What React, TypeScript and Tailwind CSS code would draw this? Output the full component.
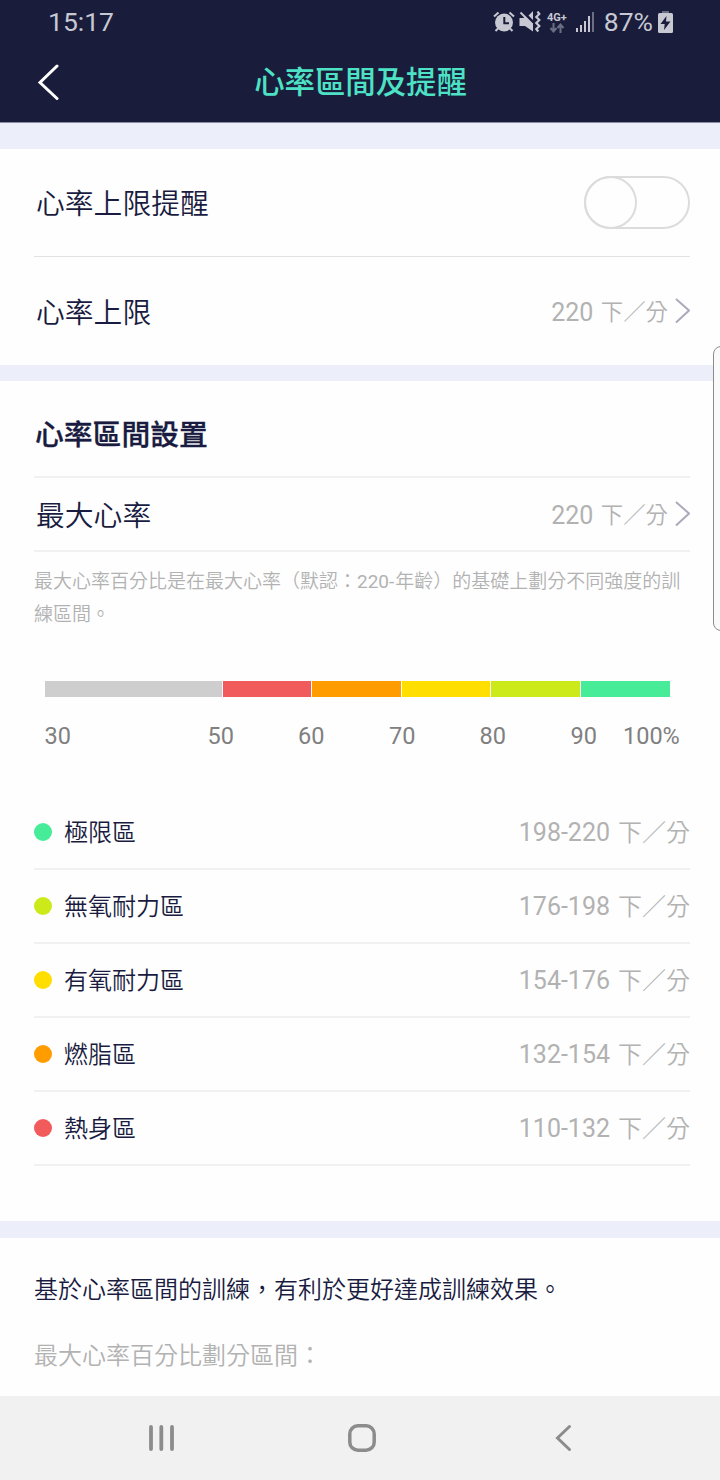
import React from 'react';

interface Zone {
    name: string;
    range: string;
    dot: string;
}

const zones: Zone[] = [
    { name: '極限區', range: '198-220', dot: 'bg-[#46ec98]' },
    { name: '無氧耐力區', range: '176-198', dot: 'bg-[#ccea1a]' },
    { name: '有氧耐力區', range: '154-176', dot: 'bg-[#ffde00]' },
    { name: '燃脂區', range: '132-154', dot: 'bg-[#ff9c00]' },
    { name: '熱身區', range: '110-132', dot: 'bg-[#f15b5b]' },
];

const segments = [
    'w-[177px] bg-[#cecece]',
    'w-[88.6px] bg-[#f15b5b]',
    'w-[88.6px] bg-[#ff9c00]',
    'w-[88.6px] bg-[#ffde00]',
    'w-[88.6px] bg-[#ccea1a]',
    'w-[89px] bg-[#46ec98]',
];

const StatusBar: React.FC = () => (
    <div className="flex h-[44px] items-center justify-between pr-[47px] pl-[48px] text-[#c7c8d2]">
        <span className="text-[26.5px] leading-none">15:17</span>
        <div className="flex items-center">
            <svg width="22" height="22" viewBox="0 0 22 22" fill="none" stroke="currentColor">
                <circle cx="11" cy="11.5" r="9" fill="currentColor" stroke="none" />
                <path d="M1 5.5 5.5 1.5M21 5.5 16.5 1.5M5 17.5 2.5 20M17 17.5 19.5 20" strokeWidth="2" />
                <path d="M11.3 6v6.2H16" stroke="#191c3b" strokeWidth="2" />
            </svg>
            <svg className="ml-[4px]" width="22" height="22" viewBox="0 0 22 22" fill="none">
                <path d="M.5 7h4l2-1.500L14 13v7.500L6 15H.500zM9.500 4.500 14 0v9z" fill="currentColor" />
                <path d="m1.500 1.500 12 12" stroke="currentColor" strokeWidth="2" />
                <path d="m18.500 .5 1.800 2.500-3 3 3 3-3 3 3 3-3 3 2 2.500" stroke="currentColor" strokeWidth="2.200" />
            </svg>
            <div className="ml-[5px] flex w-[22px] flex-col items-center">
                <span className="text-[11px] leading-[11px] font-bold">4G+</span>
                <svg width="16" height="10" viewBox="0 0 16 10" fill="none" stroke="#6c6e84" strokeWidth="2">
                    <path d="M4.500 0v8M1.500 5l3 3.500 3-3.500M11.500 10V2M8.500 5l3-3.500 3 3.500" />
                </svg>
            </div>
            <svg className="ml-[8px]" width="19" height="20" viewBox="0 0 19 20" fill="currentColor">
                <path d="M0 16h2v4H0zM4 13h2v7H4zM8 9h2v11H8zM12 4h2v16h-2z" />
                <path d="M16 0h2v20h-2z" fill="#6c6e84" />
            </svg>
            <span className="ml-[9px] text-[26.5px] leading-none">87%</span>
            <svg className="ml-[5px]" width="15" height="22" viewBox="0 0 15 22">
                <path d="M4 0h7v3H4z" fill="#6c6e84" />
                <rect y="2" width="15" height="20" rx="1.500" fill="currentColor" />
                <path d="M8.500 5 2.500 13h4.200L6 19l6.500-8.500H8z" fill="#191c3b" />
            </svg>
        </div>
    </div>
);

const ChevronRight: React.FC = () => (
    <svg className="ml-[7px]" width="15" height="26" viewBox="0 0 15 26" fill="none" stroke="#abaabc" strokeWidth="2">
        <path d="M1 1 14 12.500 1 24.500" />
    </svg>
);

const LinkRow: React.FC<{ label: string; value: string }> = ({ label, value }) => (
    <>
        <span className="pt-[4px] pl-[2px] text-[28.8px] leading-none font-[350]">{label}</span>
        <div className="flex items-center text-[#b2b2b2]">
            <span className="pt-[2px] text-[25px] leading-none">{value}</span>
            <span className="ml-[7.500px] pt-[2px] text-[22.400px] leading-none font-[350]">下／分</span>
            <ChevronRight />
        </div>
    </>
);

const App: React.FC = () => {
    return (
        <div
            lang="zh-TW"
            className="relative flex h-[1480px] w-[720px] flex-col overflow-hidden bg-[#fefefe] font-[Roboto,'Noto_Sans_CJK_TC',sans-serif] text-[#191c40]"
        >
            <header className="h-[122px] bg-[#191c3b]">
                <StatusBar />
                <div className="grid h-[76px] grid-cols-[120px_1fr_120px] items-center">
                    <svg className="ml-[37px]" width="22" height="38" viewBox="0 0 22 38" fill="none" stroke="#fff" strokeWidth="3" strokeLinecap="round">
                        <path d="M20 3 3 19.500 20 35.500" />
                    </svg>
                    <h1 className="pt-[2px] pl-[1px] text-center text-[30.400px] leading-none font-medium text-[#4de2c5]">心率區間及提醒</h1>
                </div>
            </header>
            <div className="h-[27px] border-t border-[#8b8ca0] bg-[#eceef9]" />

            <section className="h-[216px] pr-[30px] pl-[34px]">
                <div className="flex h-[108px] items-center justify-between border-b border-[#e2e2e2]">
                    <span className="pt-[4px] pl-[2px] text-[28.8px] leading-none font-[350]">心率上限提醒</span>
                    <div className="flex h-[53px] w-[106px] rounded-full border-2 border-[#dcdcdc]">
                        <div className="-mt-[2px] -ml-[2px] h-[53px] w-[53px] rounded-full border-2 border-[#dcdcdc]" />
                    </div>
                </div>
                <div className="flex h-[108px] items-center justify-between">
                    <LinkRow label="心率上限" value="220" />
                </div>
            </section>
            <div className="h-[16px] bg-[#eceef9]" />

            <section className="h-[840px] pr-[30px] pl-[34px]">
                <h2 className="flex h-[97px] items-center border-b-2 border-[#f1f1f1] pt-[14px] pl-[1px] text-[28.8px] leading-none font-medium [-webkit-text-stroke:0.3px]">心率區間設置</h2>
                <div className="flex h-[74px] items-center justify-between border-b-2 border-[#f1f1f1]">
                    <LinkRow label="最大心率" value="220" />
                </div>
                <p className="h-[129px] pt-[13px] text-[19px] leading-[33px] font-[350] whitespace-nowrap text-[#b2b2b2]">
                    最大心率百分比是在最大心率（默認：<span className="mr-[1px] font-normal">220-</span>年齡）的基礎上劃分不同強度的訓
                    <br />
                    練區間。
                </p>
                <div className="ml-[10.500px] flex h-[16px] gap-[1px]">
                    {segments.map((segment) => (
                        <div key={segment} className={segment} />
                    ))}
                </div>
                <div className="mt-[28px] ml-[10.500px] flex h-[24px] items-center text-[23.500px] leading-none text-[#808080]">
                    <span className="w-[163px]">30</span>
                    <span className="w-[90.500px]">50</span>
                    <span className="w-[91px]">60</span>
                    <span className="w-[90.500px]">70</span>
                    <span className="w-[91px]">80</span>
                    <span className="w-[52.500px]">90</span>
                    <span>100%</span>
                </div>
                <ul className="mt-[47px]">
                    {zones.map((zone) => (
                        <li key={zone.name} className="flex h-[74px] items-center border-b-2 border-[#f1f1f1]">
                            <span className={`h-[18px] w-[18px] rounded-full ${zone.dot}`} />
                            <span className="ml-[12px] pt-[2px] text-[24px] leading-none font-[350]">{zone.name}</span>
                            <span className="ml-auto text-[25px] leading-none text-[#b2b2b2]">{zone.range}</span>
                            <span className="ml-[8px] pt-[2px] text-[24px] leading-none font-[350] text-[#b2b2b2]">下／分</span>
                        </li>
                    ))}
                </ul>
            </section>
            <div className="h-[17px] bg-[#eceef9]" />

            <section className="h-[158px] px-[34px] pt-[40px] text-[24px] font-[350]">
                <p className="leading-[24px]">基於心率區間的訓練，有利於更好達成訓練效果。</p>
                <p className="mt-[42px] leading-[24px] text-[#b2b2b2]">最大心率百分比劃分區間：</p>
            </section>

            <nav className="flex h-[84px] items-center bg-[#f1f1f1] pl-[148px] text-[#8c8c8c]">
                <svg width="27" height="28" viewBox="0 0 27 28" fill="none" stroke="currentColor" strokeWidth="3.800" strokeLinecap="round">
                    <path d="M3 3v22M13.300 3v22M24 3v22" />
                </svg>
                <svg className="ml-[173px]" width="28" height="28" viewBox="0 0 28 28" fill="none" stroke="currentColor" strokeWidth="3.500">
                    <rect x="1.800" y="1.800" width="24.400" height="24.400" rx="8" />
                </svg>
                <svg className="ml-[178px]" width="18" height="28" viewBox="0 0 18 28" fill="none" stroke="currentColor" strokeWidth="3" strokeLinecap="round">
                    <path d="M15.500 2.500 3.500 14l12 11.500" />
                </svg>
            </nav>

            {/* edge panel handle */}
            <div className="absolute top-[346px] left-[713px] h-[285px] w-[20px] rounded-[8px] border border-[#8c8c8c] bg-[#fafafa]" />
        </div>
    );
};

export default App;
